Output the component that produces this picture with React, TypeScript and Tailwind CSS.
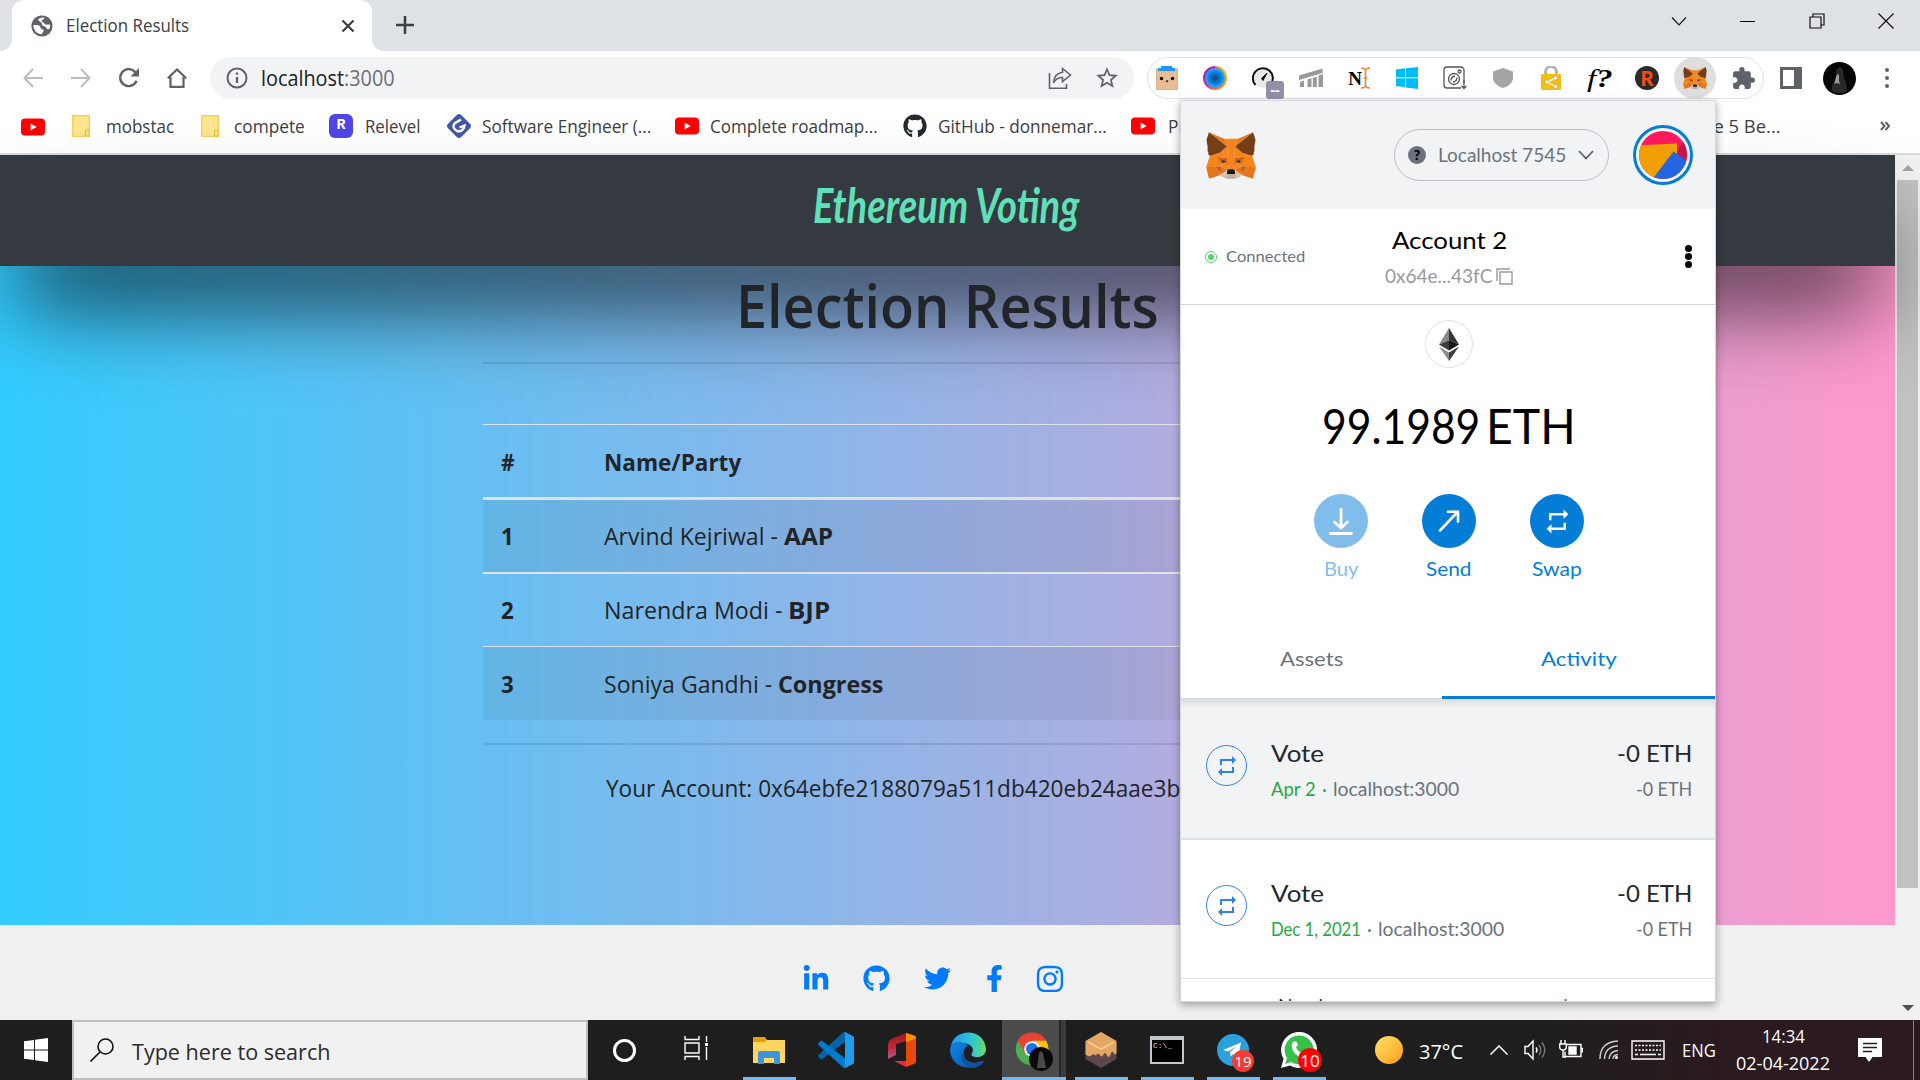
import React, { useLayoutEffect, useRef, useState } from "react";
import { FaGithub, FaTwitter, FaFacebookF, FaInstagram, FaLinkedinIn } from "react-icons/fa";
import { MdRepeat, MdExtension, MdStarBorder } from "react-icons/md";

/* One line of text condensed or widened to fill the width its class gives. */
function Fit({ className = "", children }: { className?: string; children: React.ReactNode }) {
  const box = useRef<HTMLSpanElement>(null);
  const inner = useRef<HTMLSpanElement>(null);
  const [scale, setScale] = useState(1);
  useLayoutEffect(() => {
    if (box.current && inner.current && inner.current.offsetWidth) {
      setScale(box.current.clientWidth / inner.current.offsetWidth);
    }
  }, []);
  return (
    <span ref={box} className={"block shrink-0 " + className}>
      <span ref={inner} className="inline-block origin-left whitespace-pre" style={{ transform: `scaleX(${scale})` }}>
        {children}
      </span>
    </span>
  );
}

function FoxHalf() {
  return (
    <>
      <polygon fill="#c0ad9e" points="60.75 173.25 88.3 180.5 88.3 171 90.5 168.75 106.3 168.75 106.3 188 89.4 188 68.6 179" />
      <polygon fill="#f6851b" points="75 27 89 58 95 150 106.5 150 106.5 27" />
      <polygon fill="#f6851b" points="16.3 96.2 .56 141.75 40 139.5 65.25 139.5 65.25 119.8 64.1 79.3 58.5 83.8" />
      <polygon fill="#cd6116" points="46 101.25 92.25 102.4 87.2 126 65.25 120.4" />
      <polygon fill="#e4751f" points="46 101.8 65.25 119.8 65.25 137.8" />
      <polygon fill="#f6851b" points="65.25 120.4 87.75 126 95 150.2 90 153 65.25 138.4" />
      <polygon fill="#e4751f" points="65.25 138.4 60.75 173.25 90.5 152.4" />
      <polygon fill="#e4751f" points="92.25 102.4 95 150.2 86.6 125.7" />
      <polygon fill="#cd6116" points="39.4 139 65.25 138.4 60.75 173.25" />
      <polygon fill="#e4761b" points="12.9 188.4 60.75 173.25 39.4 139 .56 141.75" />
      <polygon fill="#f6851b" points="88.9 58.5 64.7 78.75 46 101.25 92.25 103" />
      <polygon fill="#d7c1b3" points="60.75 173.25 90.5 152.4 88.3 170.4 88.3 180.5 68 176.6" />
      <polygon fill="#233447" points="70.3 112.5 64.1 125.4 86 119.8" />
      <polygon fill="#e2761b" points="12.4 .56 88.9 58.5 75.9 27" />
      <path fill="#763d16" d="M12.4.56 2.25 31.5l5.6 33.75-3.9 2.25 5.6 5-4.5 4 6.2 5.6-3.9 3.4 9 11.25 42.2-13L88.9 58.5Z" />
    </>
  );
}

function Fox({ className }: { className: string }) {
  return (
    <svg viewBox="0 0 212 189" className={className} preserveAspectRatio="none">
      <FoxHalf />
      <g transform="translate(212 0) scale(-1 1)"><FoxHalf /></g>
      <polygon fill="#161616" points="90.5 152.4 88.3 171 91 168.75 121 168.75 123.75 171 121.5 152.4 117 149.6 94.5 149.6" />
    </svg>
  );
}

const YouTube = () => (
  <svg viewBox="0 0 24 24" className="size-6 shrink-0">
    <rect y="3.5" width="24" height="17" rx="4" fill="#f00" />
    <path d="M9.600 8.600v6.800l6-3.400z" fill="#fff" />
  </svg>
);

const Folder = () => (
  <svg viewBox="0 0 18 22" className="h-[22px] w-[18px] shrink-0">
    <path d="M.7.7h16.6v20.6H.7z" fill="#ffe590" stroke="#f7d256" strokeWidth="1.4" />
    <path d="M13.5 21v-4.5a1.8 1.8 0 0 1 3.6 0V21z" fill="#ffe590" stroke="#e9bd31" strokeWidth="1.1" />
  </svg>
);

function TabStrip() {
  return (
    <div className="flex h-[51px] items-start bg-[#dee1e6]">
      <div className="flex h-[51px] w-3 items-end"><div className="size-3 bg-white"><div className="size-3 rounded-br-xl bg-[#dee1e6]" /></div></div>
      <div className="flex h-[51px] w-[360px] items-center rounded-t-xl bg-white pl-[19px] pr-[17px]">
        <svg viewBox="0 0 22 22" className="mr-[13px] size-[22px]">
          <circle cx="11" cy="11" r="10.6" fill="#5f6368" />
          <path d="M2.400 10c2.300 0 5.600-.2 6.600 1.300.8 1.100.3 2.300 1.500 2.600 1.500.3 2.200.4 2.100 1.800-.1 1.600-1.600 1.500-1.600 3.600-4.700.1-8.700-3.900-8.600-9.300zM7.300 4.200c1.400-1 3-1.700 5.700-1.700.3 1.500-.4 2.100-1.600 2.600-1.100.5-1 1.900.3 2.200 1.700.3 1.500 1.900 2.700 2.300 1.500.5 3.600-.6 4.700.4.500 2.200-.8 4.500-2.100 4.300-1.600-.2-1.600-2.600-3.400-2.900-1.800-.3-3-1.300-2.800-2.900.1-1.600-3.500-1.800-3.500-4.300z" fill="#fff" />
        </svg>
        <Fit className="-mt-[2px] w-[123px] text-[18px] leading-6 text-[#3c4043]">Election Results</Fit>
        <svg viewBox="0 0 14 14" className="ml-auto size-[14px]" stroke="#3c4043" strokeWidth="2.200"><path d="M1.500 1.500l11 11M12.500 1.500l-11 11" /></svg>
      </div>
      <div className="flex h-[51px] w-3 items-end"><div className="size-3 bg-white"><div className="size-3 rounded-bl-xl bg-[#dee1e6]" /></div></div>
      <svg viewBox="0 0 18 18" className="ml-3 mt-4 size-[18px]" stroke="#3c4043" strokeWidth="2.600"><path d="M9 0v18M0 9h18" /></svg>
      <div className="ml-auto mt-[11px] flex h-5 items-center">
        <svg viewBox="0 0 16 16" className="mr-[53px] size-4" fill="none" stroke="#111" strokeWidth="1.100"><path d="M1 4.500l7 7.500 7-7.500" /></svg>
        <div className="mr-[54px] h-px w-[15px] bg-black" />
        <svg viewBox="0 0 16 16" className="mr-[53px] size-4" fill="none" stroke="#111" strokeWidth="1.200"><path d="M1 4h11v11H1zM4 4V1h11v11h-3" /></svg>
        <svg viewBox="0 0 16 16" className="mr-[26px] size-4" stroke="#111" strokeWidth="1.200"><path d="M.5.5l15 15M15.500.5l-15 15" /></svg>
      </div>
    </div>
  );
}

const Cell = ({ children, className = "" }: { children: React.ReactNode; className?: string }) => (
  <div className={"flex h-[42px] w-12 shrink-0 items-center justify-center " + className}>{children}</div>
);

function Toolbar() {
  return (
    <div className="flex h-[54px] items-center bg-white">
      <div className="flex w-[210px] pl-[9px]">
        <Cell><svg viewBox="0 0 20 20" className="size-5" fill="none" stroke="#babcbe" strokeWidth="2"><path d="M20 10H1.500M10 1L1.500 10l8.500 9" /></svg></Cell>
        <Cell><svg viewBox="0 0 20 20" className="size-5" fill="none" stroke="#babcbe" strokeWidth="2"><path d="M0 10h18.500M10 1l8.500 9-8.500 9" /></svg></Cell>
        <Cell><svg viewBox="0 0 20 20" className="size-5" fill="none" stroke="#5f6368" strokeWidth="2.400"><path d="M17.600 12.800A8.500 8.500 0 1 1 16.500 4.500" /><path d="M20 0v8.500h-8.500z" fill="#5f6368" stroke="none" /></svg></Cell>
        <Cell><svg viewBox="0 0 20 20" className="size-5" fill="none" stroke="#5f6368" strokeWidth="2.200"><path d="M.8 10.300L10 1.500l9.200 8.800M3.500 9v9.800h13V9" /></svg></Cell>
      </div>
      <div className="flex h-[42px] w-[924px] items-center rounded-full bg-[#f1f3f4] pl-[16px] pr-[14px]">
        <svg viewBox="0 0 22 22" className="mr-[13px] size-[22px]" fill="none" stroke="#5f6368" strokeWidth="2"><circle cx="11" cy="11" r="9.500" /><path d="M11 10v6M11 5.500v2.200" strokeWidth="2.300" /></svg>
        <Fit className="w-[134px] text-[21px] leading-6 text-[#202124]">localhost<span className="text-[#6b6f74]">:3000</span></Fit>
        <svg viewBox="0 0 24 24" className="ml-auto mr-[22px] size-6" fill="none" stroke="#5f6368" strokeWidth="1.600"><path d="M1.500 7v15.200h17V18" /><path d="M14.500 2.500l8 6.500-8 6.500v-4c-4.500 0-7 1.500-9 5.500.5-6 3.500-10 9-10.700z" /></svg>
        <MdStarBorder className="size-[26px] text-[#5f6368]" />
      </div>
      <div className="ml-[13px] flex h-[42px] w-[617px] items-center rounded-full border border-[#dfe1e5]">
        <div className="-ml-[5px] flex">
          <Cell><svg viewBox="0 0 22 24" className="h-6 w-[22px]"><path d="M0 3h22v21H0z" fill="#e8bd94" stroke="#d4a57c" /><path d="M5 0h11v2h3v3H2V2h3z" fill="#2196f3" /><circle cx="5.500" cy="12.500" r="1.700" /><circle cx="16.500" cy="12.500" r="1.700" /><path d="M9.500 14.500h3l-1.500 2z" /></svg></Cell>
          <Cell><div className="flex size-6 items-center justify-center rounded-full bg-[conic-gradient(#ff7043,#ffb300,#ffa000,#ff7043,#e91e8c,#9c27b0,#c2259b)]"><div className="size-[20px] rounded-full bg-[radial-gradient(circle,#0d5290_0_18%,#0a6fc0_24%_34%,#0a84e0_40%_50%,#1aa0ff_56%)]" /></div></Cell>
          <Cell className="relative"><svg viewBox="0 0 22 22" className="size-[22px]"><circle cx="11" cy="11" r="10" fill="#e8eae8" /><path d="M3.500 18a10 10 0 1 1 15.500-1" fill="none" stroke="#111" strokeWidth="2" /><path d="M9.500 11.500L15 6l-4 7.500z" stroke="#111" /></svg><div className="absolute left-[27px] top-6 flex h-[18px] w-[18px] items-center justify-center rounded-[3px] bg-[#9090a8] text-[14px] font-bold leading-none text-white">--</div></Cell>
          <Cell><svg viewBox="0 0 24 20" className="h-5 w-6" fill="#999"><path d="M0 7.500L23.500.5v4.500L0 12zM1 14l4-1.500V19H1zM8.500 11.500l4-1.500v9h-4zM13.800 10l4-1.500V19h-4zM19.500 7.500L24 6v13h-4.500z" /></svg></Cell>
          <Cell><span className="font-['Liberation_Serif'] text-[19px] font-bold leading-none text-black">N</span><svg viewBox="0 0 9 22" className="-ml-px h-[22px] w-[9px]" fill="none" stroke="#f08536" strokeWidth="1.600"><path d="M0 1c3 0 4.500.8 4.500 3v14c0 2.200 1.500 3 4.500 3M9 1C6 1 4.500 1.800 4.500 4v14c0 2.200-1.500 3-4.500 3M2.500 11h4" /></svg></Cell>
          <Cell><svg viewBox="0 0 22 22" className="size-[22px]" fill="#00bcf2"><path d="M0 2.500l9-1.200v9H0zM10 1.200L22 0v10.300H10zM0 11.300h9v9L0 19zM10 11.300h12V22l-12-1.500z" /></svg></Cell>
          <Cell><svg viewBox="0 0 24 24" className="size-6" fill="none" stroke="#555" strokeWidth="1.300"><path d="M21 17V4a3 3 0 0 0-3-3H4a3 3 0 0 0-3 3v15a3 3 0 0 0 3 3h14" /><circle cx="11" cy="13" r="5.500" /><path d="M8 14.500q0-4 4-4.500M14 11.500q0 4-4 4.500" /><circle cx="16.500" cy="5.500" r="1.500" /><path d="M21 14v9M18.500 20l2.500 2.500 2.500-2.500" /></svg></Cell>
          <Cell><svg viewBox="0 0 20 20" className="size-5" fill="#a5a5a5"><path d="M10 0l10 3.500v6C20 14 16.500 18 10 20 3.500 18 0 14 0 9.500v-6z" /></svg></Cell>
          <Cell><svg viewBox="0 0 20 24" className="h-6 w-5"><path d="M4.500 9V6a5.500 5.500 0 0 1 11 0v3" fill="none" stroke="#b0b7bd" strokeWidth="3" /><rect y="8" width="20" height="16" rx="1" fill="#f6bf0f" /><path d="M14.500 12L6 16l8.500 4.500" fill="none" stroke="#fff" strokeWidth="1.400" /><g fill="#fff" stroke="#888" strokeWidth=".5"><circle cx="14.500" cy="12" r="2" /><circle cx="6" cy="16" r="2" /><circle cx="14.500" cy="20.500" r="2" /></g></svg></Cell>
          <Cell><Fit className="w-[25px] font-['Liberation_Serif'] text-[25px] italic leading-none text-black">f<b className="font-bold">?</b></Fit></Cell>
          <Cell><div className="flex size-6 items-center justify-center rounded-full bg-[#2b2b2b] font-['Lato'] text-[20px] font-black leading-none text-[#ff4b0a]">R</div></Cell>
          <Cell><div className="flex size-[42px] shrink-0 items-center justify-center rounded-full bg-[#dedede]"><Fox className="h-[22px] w-6" /></div></Cell>
          <Cell><MdExtension className="size-[25px] text-[#5f6368]" /></Cell>
        </div>
      </div>
      <div className="ml-[3px] flex">
        <Cell><div className="flex size-[22px] justify-end border-[3px] border-[#5f6368]"><div className="h-full w-[5px] bg-[#5f6368]" /></div></Cell>
        <Cell><svg viewBox="0 0 33 33" className="size-[33px]"><circle cx="16.500" cy="16.500" r="16.500" fill="#060606" /><path d="M13 10c0-5 6-6 7-2 .5 4 0 8 3 12l1 9c-5 3-11 3-15 0l0-6 5-4z" fill="#2a2a2a" /><path d="M13 15q1-4 3-2l0 6 1 3-3-1-3 1z" fill="#999" /></svg></Cell>
        <Cell><div className="flex flex-col gap-[4px]"><i className="size-[4px] rounded-full bg-[#5f6368]" /><i className="size-[4px] rounded-full bg-[#5f6368]" /><i className="size-[4px] rounded-full bg-[#5f6368]" /></div></Cell>
      </div>
    </div>
  );
}

function Bookmarks() {
  return (
    <div className="flex h-[50px] items-center border-b-2 border-[#d9dcde] bg-white pb-[6px] pl-[21px] text-[18px] leading-6 text-[#3c4043]">
      <div className="pt-px"><YouTube /></div>
      <div className="ml-[27px]"><Folder /></div><Fit className="ml-[16px] w-[68px]">mobstac</Fit>
      <div className="ml-[27px]"><Folder /></div><Fit className="ml-[15px] w-[71px]">compete</Fit>
      <div className="ml-[24px] flex size-6 items-center justify-center rounded-md bg-[#5046e4] font-['Liberation_Mono'] text-[15px] font-bold text-white">R</div>
      <Fit className="ml-[12px] w-[56px]">Relevel</Fit>
      <svg viewBox="0 0 24 24" className="ml-[26px] size-6 shrink-0"><path d="M10 .8q2-1.600 4 0l9.200 9.200q1.600 2 0 4L14 23.200q-2 1.600-4 0L.8 14q-1.600-2 0-4z" fill="#4257a8" /><path d="M14 5.500L7.500 9.500c-2 2-1 6 2.500 7.500 4 1 7-1 7.500-5.500l-5 2" fill="none" stroke="#fff" strokeWidth="2.400" /></svg>
      <Fit className="ml-[11px] w-[169px]">Software Engineer (...</Fit>
      <div className="ml-[24px]"><YouTube /></div><Fit className="ml-[11px] w-[168px]">Complete roadmap...</Fit>
      <FaGithub className="ml-[25px] size-6 shrink-0 text-[#24292f]" /><Fit className="ml-[11px] w-[169px]">GitHub - donnemar...</Fit>
      <div className="ml-[24px]"><YouTube /></div><Fit className="ml-[13px] w-[111px]">Programming</Fit>
      <Fit className="ml-auto w-[89px]">The 5 Be...</Fit>
      <svg viewBox="0 0 10 10" className="ml-[99px] mr-[30px] size-[10px]" fill="none" stroke="#5f6368" strokeWidth="2"><path d="M1 1l3.500 4L1 9M5.500 1L9 5 5.500 9" /></svg>
    </div>
  );
}

const rows = [
  { id: "1", name: "Arvind Kejriwal - ", party: "AAP", nameW: "w-[180px]", partyW: "w-[49px]", bg: "bg-black/5 h-[74px] border-b-2" },
  { id: "2", name: "Narendra Modi - ", party: "BJP", nameW: "w-[184px]", partyW: "w-[42px]", bg: "h-[73px] border-b" },
  { id: "3", name: "Soniya Gandhi - ", party: "Congress", nameW: "w-[174px]", partyW: "w-[105px]", bg: "bg-black/5 h-[73px] border-b-0" },
];

function VotingPage() {
  return (
    <div className="flex h-[865px] w-[1895px] flex-col">
      <header className="relative z-10 flex h-[111px] shrink-0 items-start justify-center bg-[#343a40] shadow-[0_56px_88px_-18px_rgba(0,0,0,0.74)]">
        <Fit className="-ml-[4px] mt-[22px] w-[266px] font-['Lato'] text-[48px] font-bold italic leading-[56px] text-[#5fe0b9]">Ethereum Voting</Fit>
      </header>
      <main className="h-[659px] shrink-0 bg-[linear-gradient(90deg,#33ccff,#ff99cc)] text-[24px] leading-9 text-[#212529]">
        <div className="relative z-20 ml-[483px] w-[928px]">
          <h1 className="flex h-[96px] justify-center pt-[3px]"><Fit className="w-[423px] text-[59px] font-semibold leading-[72px] text-[#212529]">Election Results</Fit></h1>
          <div className="h-[2px] bg-black/10" />
          <div className="mt-[60px] flex h-[76px] items-center border-b-[3px] border-t border-[#dee2e6] pl-[18px] pt-[2px] font-bold">
            <Fit className="w-[14px]">#</Fit><Fit className="ml-[89px] w-[137px]">Name/Party</Fit>
          </div>
          {rows.map((r) => (
            <div key={r.id} className={"flex items-center border-[#dee2e6] pl-[18px] " + r.bg}>
              <Fit className="w-[13px] font-bold">{r.id}</Fit>
              <Fit className={"ml-[90px] " + r.nameW}>{r.name}</Fit>
              <Fit className={"font-bold " + r.partyW}>{r.party}</Fit>
            </div>
          ))}
          <div className="mt-[23px] h-[2px] bg-black/10" />
          <Fit className="ml-[123px] mt-[25px] w-[682px]">Your Account: 0x64ebfe2188079a511db420eb24aae3b7c1d843fc</Fit>
        </div>
      </main>
      <footer className="flex h-[95px] items-start bg-[#f0f0f0] pl-[802px] pt-[40px] text-[#007bff]">
        <FaLinkedinIn className="size-[28px]" />
        <FaGithub className="ml-[33px] size-[27px]" />
        <FaTwitter className="ml-[34px] size-[27px]" />
        <FaFacebookF className="ml-[30px] size-[27px]" />
        <FaInstagram className="-mt-px ml-[27px] size-[30px]" />
      </footer>
    </div>
  );
}

function Scrollbar() {
  return (
    <div className="flex h-[865px] w-[25px] flex-col items-center bg-[#f1f1f1] pt-[10px]">
      <svg viewBox="0 0 12 6" className="h-[6px] w-3" fill="#a3a3a3"><path d="M0 6l6-6 6 6z" /></svg>
      <div className="mt-[9px] h-[708px] w-[21px] bg-[#c1c1c1]" />
      <svg viewBox="0 0 12 6" className="mt-[117px] h-[6px] w-3" fill="#505050"><path d="M0 0l6 6 6-6z" /></svg>
    </div>
  );
}

function Action({ label, w, dim, children }: { label: string; w: string; dim?: boolean; children: React.ReactNode }) {
  return (
    <div className={"flex w-[108px] flex-col items-center " + (dim ? "opacity-50" : "")}>
      <div className="flex size-[54px] items-center justify-center rounded-full bg-[#037dd6] text-white">{children}</div>
      <Fit className={"mt-[9px] text-[19px] leading-6 text-[#037dd6] " + w}>{label}</Fit>
    </div>
  );
}

function Activity({ date, dateW, active }: { date: string; dateW: string; active?: boolean }) {
  return (
    <div className={"flex shrink-0 items-start border-[#dfe1e4] pl-[25px] pr-[23px] " + (active ? "h-[141px] border-b-2 bg-[#f2f3f4] pt-[39px] shadow-[inset_0_7px_7px_-4px_rgba(0,0,0,0.12)]" : "h-[139px] border-b bg-white pt-[38px]")}>
      <div className="mt-[7px] flex size-[41px] shrink-0 items-center justify-center rounded-full border-[1.500px] border-[#2f80ed] text-[#2f80ed]"><MdRepeat className="size-[24px]" /></div>
      <div className="ml-[24px]">
        <Fit className="w-[53px] text-[24px] leading-[30px] text-[#24292e]">Vote</Fit>
        <div className="mt-[9px] flex text-[18.500px] leading-6">
          <Fit className={"text-[#28a745] " + dateW}>{date}</Fit>
          <span className="w-[17px] text-center text-[#28a745]">·</span>
          <Fit className="w-[126px] text-[#6a737d]">localhost:3000</Fit>
        </div>
      </div>
      <div className="ml-auto flex flex-col items-end">
        <Fit className="w-[75px] text-[24px] leading-[30px] text-[#24292e]">-0 ETH</Fit>
        <Fit className="mt-[9px] w-[56px] text-[18.500px] leading-6 text-[#6a737d]">-0 ETH</Fit>
      </div>
    </div>
  );
}

function Wallet() {
  return (
    <section className="absolute left-[1180px] top-[100px] z-30 flex h-[902px] w-[536px] flex-col overflow-hidden border border-[#d5d7da] bg-white font-['Lato'] shadow-[0_3px_8px_rgba(0,0,0,0.35)]">
      <div className="flex h-[108px] shrink-0 items-center bg-[#f2f3f4] pl-[25px] pr-[22px]">
        <Fox className="h-[47px] w-[50px]" />
        <div className="ml-auto flex h-[52px] w-[215px] items-center rounded-full border border-[#bbc0c5] pl-[13px]">
          <div className="flex size-[18px] items-center justify-center rounded-full bg-[#6a737d] text-[14px] font-black leading-none text-black">?</div>
          <Fit className="ml-[12px] w-[128px] text-[19px] leading-6 text-[#6a737d]">Localhost 7545</Fit>
          <svg viewBox="0 0 16 10" className="ml-[12px] h-[10px] w-4" fill="none" stroke="#5b6168" strokeWidth="1.800"><path d="M1 1l7 7.500L15 1" /></svg>
        </div>
        <svg viewBox="0 0 60 60" className="ml-[24px] size-[60px]">
          <clipPath id="disc"><circle cx="30" cy="30" r="24" /></clipPath>
          <circle cx="30" cy="30" r="28.500" fill="#f5f6f7" stroke="#037dd6" strokeWidth="3" />
          <g clipPath="url(#disc)"><path d="M0 0h60v60H0z" fill="#fc1960" /><path d="M50 17l-6 10v10h16V17z" fill="#c8144c" /><path d="M0 20.500l44-2V30L22 60H0z" fill="#f29f05" /><path d="M40.500 26.500L60 40v20H15z" fill="#2465e1" /></g>
        </svg>
      </div>
      <div className="flex h-[96px] shrink-0 items-center border-b border-[#d2d4d6] pl-[24px]">
        <div className="flex size-[12px] items-center justify-center rounded-full border border-[#4cd964]"><div className="size-[6px] rounded-full bg-[#4cd964]" /></div>
        <Fit className="-mt-px ml-[9px] w-[79px] text-[15.500px] leading-5 text-[#6a737d]">Connected</Fit>
        <div className="ml-[73px] flex w-[142px] flex-col items-center">
          <Fit className="w-[115px] text-[24px] leading-[30px] text-black">Account 2</Fit>
          <div className="mt-[9px] flex items-center"><Fit className="w-[107px] text-[19px] leading-6 text-[#989a9b]">0x64e...43fC</Fit>
            <svg viewBox="0 0 17 17" className="ml-[4px] size-[17px]" fill="none" stroke="#989a9b" strokeWidth="1.400"><path d="M4 4h12v12H4zM1 13V1h13" /></svg></div>
        </div>
        <div className="ml-auto mr-[23px] flex flex-col gap-[1px]"><i className="size-[7px] rounded-full bg-black" /><i className="size-[7px] rounded-full bg-black" /><i className="size-[7px] rounded-full bg-black" /></div>
      </div>
      <div className="flex h-[315px] shrink-0 flex-col items-center pl-[2px] pt-[15px]">
        <div className="flex size-[48px] items-center justify-center rounded-full border border-[#dfe1e4]">
          <svg viewBox="0 0 20 33" className="h-[33px] w-5"><path d="M10 0v12.200L0 16.600z" fill="#8a8a8a" /><path d="M10 0v12.200l10 4.400z" fill="#343434" /><path d="M0 16.600l10-4.400v10.300z" fill="#3c3c3b" /><path d="M20 16.600l-10-4.400v10.300z" fill="#141414" /><path d="M0 18.500l10 6V33z" fill="#8c8c8c" /><path d="M20 18.500l-10 6V33z" fill="#3c3c3b" /></svg>
        </div>
        <div className="mt-[29px] flex gap-[6px] text-[48px] leading-[58px] text-black"><Fit className="w-[158px]">99.1989</Fit><Fit className="w-[90px]">ETH</Fit></div>
        <div className="mt-[39px] flex">
          <Action label="Buy" w="w-[34px]" dim><svg viewBox="0 0 24 27" className="h-[27px] w-6" fill="none" stroke="#fff" strokeWidth="2.800" strokeLinecap="round" strokeLinejoin="round"><path d="M12 1.500v18M5.500 14l6.500 6 6.500-6M1.500 25.500h21" /></svg></Action>
          <Action label="Send" w="w-[46px]"><svg viewBox="0 0 22 22" className="size-[22px]" fill="none" stroke="#fff" strokeWidth="2.600" strokeLinecap="round"><path d="M2 20.500L19.500 2M10 1.800h10v10" /></svg></Action>
          <Action label="Swap" w="w-[50px]"><MdRepeat className="size-[29px]" /></Action>
        </div>
      </div>
      <div className="flex h-[79px] shrink-0 border-b border-[#d6d9dc] text-[20px] leading-6">
        <div className="flex w-[261px] justify-center pt-[26px]"><Fit className="w-[63px] text-[#6a737d]">Assets</Fit></div>
        <div className="-mb-px flex w-[273px] justify-center border-b-[3px] border-[#037dd6] pt-[26px]"><Fit className="w-[76px] text-[#037dd6]">Activity</Fit></div>
      </div>
      <Activity date="Apr 2" dateW="w-[45px]" active />
      <Activity date="Dec 1, 2021" dateW="w-[90px]" />
      <div className="flex h-[30px] shrink-0 justify-between pl-[97px] pr-[142px] pt-[15px] text-[19px] leading-[24px]"><span className="text-[#24292e]">Need</span><span className="text-[#037dd6]">k</span></div>
    </section>
  );
}

const Task = ({ children, className = "", open }: { children?: React.ReactNode; className?: string; open?: boolean }) => (
  <div className={"relative flex h-[60px] w-[66px] shrink-0 items-center justify-center " + className}>
    {children}
    {open && <div className="absolute bottom-0 h-[3px] w-[53px] bg-[#76b9ed]" />}
  </div>
);

function Taskbar() {
  return (
    <div className="flex h-[60px] items-center bg-linear-to-r from-[#1e1e1e] from-80% to-[#2b1a1f] to-90% text-white">
      <div className="flex w-[72px] justify-center"><svg viewBox="0 0 24 24" className="size-6" fill="#fff"><path d="M0 3.300l10-1.400v9.500H0zM11 1.700L24 0v11.400H11zM0 12.400h10v9.700L0 20.800zM11 12.400h13V24l-13-1.800z" /></svg></div>
      <div className="flex h-[60px] w-[516px] items-center border-2 border-[#bfbfbf] bg-[#f1f1f1] pl-4">
        <svg viewBox="0 0 24 24" className="size-6" fill="none" stroke="#111" strokeWidth="1.600"><circle cx="15.500" cy="8.500" r="7.500" /><path d="M10.200 13.800L.5 23.500" /></svg>
        <Fit className="ml-[18px] mt-[2px] w-[198px] text-[22px] leading-7 text-[#2b2b2b]">Type here to search</Fit>
      </div>
      <div className="flex w-[72px] justify-center"><div className="size-[23px] rounded-full border-[3px] border-white" /></div>
      <div className="flex w-[71px] justify-center pb-1"><svg viewBox="0 0 24 24" className="size-6" fill="none" stroke="#fff" strokeWidth="1.400"><path d="M1 7h14v10H1zM1 0v3.500h14V0M1 24v-3.500h14V24M22.500 0v6M22.500 11v13" /><path d="M21 7h3v3h-3z" fill="#fff" stroke="none" /></svg></div>
      <Task className="ml-[5px]" open><svg viewBox="0 0 32 28" className="h-7 w-8"><path d="M0 1h12l2 3h17v7H0z" fill="#e3a008" /><path d="M0 6h12l2-2h18v23H0z" fill="#ffd75e" /><path d="M5 28V17q0-2 2-2h18q2 0 2 2v11h-6v-6H11v6z" fill="#3d95dd" /></svg></Task>
      <Task className="ml-px"><svg viewBox="0 0 100 100" className="size-[36px]"><path fill="#0065A9" d="M96.500 10.800L75.900.9C73.500-.3 70.600.2 68.800 2.100L1.300 63.600c-1.800 1.600-1.800 4.500 0 6.100l5.500 5c1.500 1.400 3.700 1.500 5.300.3L93.400 13.400c2.700-2.100 6.600-.1 6.600 3.300v-.3c0-2.400-1.400-4.600-3.500-5.600z" /><path fill="#007ACC" d="M96.500 89.200l-20.600 9.900c-2.400 1.200-5.200.7-7.100-1.200L1.300 36.400c-1.800-1.600-1.800-4.500 0-6.100l5.500-5c1.500-1.400 3.700-1.500 5.300-.3l81.300 61.600c2.700 2.100 6.600.1 6.600-3.300v.3c0 2.400-1.400 4.600-3.500 5.600z" /><path fill="#1F9CF0" d="M75.900 99.100c-2.400 1.200-5.300.7-7.100-1.200 2.300 2.300 6.200.7 6.200-2.600V4.700c0-3.300-3.900-4.900-6.200-2.600C70.600.2 73.500-.3 75.900.9l20.600 9.900c2.100 1 3.500 3.200 3.500 5.600v67.200c0 2.400-1.400 4.600-3.500 5.600z" /></svg></Task>
      <Task><svg viewBox="0 0 28 34" className="h-[34px] w-7"><defs><linearGradient id="off" x1="0" y1="0" x2="0" y2="1"><stop stopColor="#a01818" /><stop offset=".6" stopColor="#c02a3c" /><stop offset="1" stopColor="#b85a9c" /></linearGradient></defs><path d="M18 0L5 5Q0 7 0 12v14l8-4V11l10-3z" fill="url(#off)" /><path d="M18 0l8 2.500q2 .5 2 3v23q0 2-2 2.500L18 34z" fill="#e8480c" /><path d="M18 0l8 2.500q2 .5 2 3L18 9z" fill="#ff8f00" /><path d="M6 28h12v6z" fill="#ef2443" /></svg></Task>
      <Task><svg viewBox="0 0 36 36" className="size-9"><defs><linearGradient id="e1"><stop stopColor="#2196e8" /><stop offset=".6" stopColor="#2fc4d8" /><stop offset="1" stopColor="#6ade5e" /></linearGradient><linearGradient id="e2" x1="0" y1="0" x2="1" y2="1"><stop stopColor="#0a84e0" /><stop offset="1" stopColor="#0a5cb8" /></linearGradient></defs><path d="M1 14C3-3 34-6 36 17c0 6-5 8.500-10 8-4-.4-5.500-2-4-4 2-2.500 1-8-6-9.500C9 10.500 3 11 1 14z" fill="url(#e1)" /><path d="M0 18c0-6 6-9 12-7.500 3 .7 5 2 6 3.500-7 2-7 18 9 20C14 39.500 0 31 0 18z" fill="url(#e2)" /><path d="M14 20c-1 8 7 12 14 10 3-.6 5-2 6-1-3 6-9 7-12 7-9-1-14-11-8-16z" fill="#15509e" /></svg></Task>
      <div className="relative ml-px flex h-[60px] w-[64px] shrink-0 border-b-[3px] border-[#76b9ed]">
        <div className="flex w-[57px] items-center justify-center bg-[#4b4b4b] pl-[2px]">
          <svg viewBox="0 0 48 48" className="size-[34px]"><circle cx="24" cy="24" r="23" fill="#4caf50" /><path d="M24 24L4 12.500A23 23 0 0 1 44 12.500z" fill="#ea4335" /><path d="M24 12.500h20A23 23 0 0 1 23.500 47L34 29z" fill="#fbc116" /><path d="M4 12.500L14 30l10-17.500z" fill="#ea4335" /><circle cx="24" cy="24" r="11" fill="#fff" /><circle cx="24" cy="24" r="8.600" fill="#1a73e8" /></svg>
        </div>
        <div className="w-[2px] bg-[#262626]" />
        <div className="w-[5px] bg-[#3b3b3b]" />
        <svg viewBox="0 0 24 24" className="absolute left-[27px] top-[27px] size-6"><circle cx="12" cy="12" r="12" fill="#0a0a0a" /><path d="M10 6c1-2 4-2 4 1l2 8 1 6H8l1-7z" fill="#4a4a4a" /></svg>
      </div>
      <Task className="ml-[2px]" open><svg viewBox="0 0 32 36" className="h-9 w-8"><path d="M16 0l15.500 9v18L16 36 .5 27V9z" fill="#5e464d" /><path d="M16 0l15.500 9v11.500q-1 4-3 0-2-2-3 2-2 5-4 0-1-3-3 0-2 4-4 0-1-2-4 1-2-3-4 0-2 2-6-1V9z" fill="#e4a663" /><path d="M3 10l13 7 13-7" fill="none" stroke="#ffd9a8" strokeWidth="1.300" /></svg></Task>
      <Task open><div className="h-7 w-[34px] border-2 border-t-[4px] border-[#c3c8cf] bg-black pl-px font-['Liberation_Mono'] text-[8px] leading-[11px] text-[#ddd]">C:\_</div></Task>
      <Task open><svg viewBox="0 0 32 32" className="size-8"><circle cx="16" cy="16" r="16" fill="#2aa1da" /><path d="M6 16L24 8.500 21 24l-5-4-2.500 2.500L13 18l7-6-9 5.500z" fill="#fff" /></svg><div className="absolute left-[32px] top-[30px] flex size-[22px] items-center justify-center rounded-full bg-[#f23c34] text-[15px] leading-none">19</div></Task>
      <Task open><svg viewBox="0 0 36 36" className="size-9"><path d="M0 36l2.500-9A18 18 0 1 1 9 33.500z" fill="#fff" /><path d="M4 32l2-6a14.500 14.500 0 1 1 4 4z" fill="#35c24b" /><path d="M12 10c-4 4 2 17 13 16 3-2 3-4 2-5l-4-2-2 2c-3-1-5-3-6-6l2-2-2-4z" fill="#fff" /></svg><div className="absolute left-[32px] top-[28px] flex size-6 items-center justify-center rounded-full bg-[#fa0505] text-[17px] leading-none">10</div></Task>
      <div className="-mt-px ml-[43px] size-[28px] rounded-full bg-linear-to-br from-[#ffe566] to-[#ff9a00]" />
      <Fit className="ml-[16px] mt-[4px] w-[44px] text-[20px] leading-6">37°C</Fit>
      <svg viewBox="0 0 18 10" className="ml-[27px] h-[10px] w-[18px]" fill="none" stroke="#fff" strokeWidth="1.500"><path d="M.5 9.500L9 1l8.500 8.500" /></svg>
      <svg viewBox="0 0 22 22" className="ml-[16px] size-[22px]" fill="none" stroke="#fff" strokeWidth="1.400"><path d="M1 7.500h3l5-5.500v18l-5-5.500H1zM12 8.500q2 2.500 0 5" /><path d="M15 6q3.500 5 0 10M18 3.500q5.500 7.500 0 15" stroke="#777" /></svg>
      <svg viewBox="0 0 24 20" className="ml-[13px] h-5 w-6" fill="none" stroke="#fff" strokeWidth="1.400"><path d="M8 4.500h14v12H6v-5M22.500 8.500h1v4M2 0v4M6 0v4M.7 4h6.600v3q0 3-3.300 3T.7 7zM4 10v7h3" /><path d="M10 7h7v7h-7z" fill="#fff" /></svg>
      <svg viewBox="0 0 20 20" className="ml-[16px] size-5" fill="none" stroke="#ccc" strokeWidth="1.400"><path d="M1 19Q1 2 19 1M5.500 19Q6 6.500 19 6M10 19q1-8 9-8.500M14 19q0-4 5-4.500" /><circle cx="17.500" cy="17.500" r="1.500" fill="#fff" stroke="none" /></svg>
      <svg viewBox="0 0 34 20" className="ml-[12px] h-5 w-[34px]" fill="none" stroke="#fff" strokeWidth="1.400"><path d="M1 1h32v18H1z" /><path d="M4 5.500h26M4 10h26" strokeDasharray="2 1.500" /><path d="M4 14.500h3M9 14.500h16M27 14.500h3" /></svg>
      <Fit className="ml-[17px] w-[34px] text-[19px] leading-6">ENG</Fit>
      <div className="ml-[20px] flex w-[94px] flex-col items-center text-[18px]"><Fit className="w-[43px] leading-[27px]">14:34</Fit><Fit className="w-[94px] leading-[27px]">02-04-2022</Fit></div>
      <svg viewBox="0 0 24 24" className="ml-[28px] size-6"><path d="M0 0h24v19H14.500L11 24l-3.500-5H0z" fill="#fff" /><path d="M5 5.500h14M5 9.500h14M5 13.500h9" stroke="#2b1a1f" strokeWidth="1.300" /></svg>
      <div className="ml-auto mr-[6px] h-full w-px bg-[#8a8084]" />
    </div>
  );
}

export default function App() {
  return (
    <div className="relative flex h-[1080px] w-[1920px] flex-col overflow-hidden bg-white font-['Open_Sans','Noto_Sans',sans-serif]">
      <TabStrip />
      <Toolbar />
      <Bookmarks />
      <div className="flex h-[865px]"><VotingPage /><Scrollbar /></div>
      <Taskbar />
      <Wallet />
    </div>
  );
}
